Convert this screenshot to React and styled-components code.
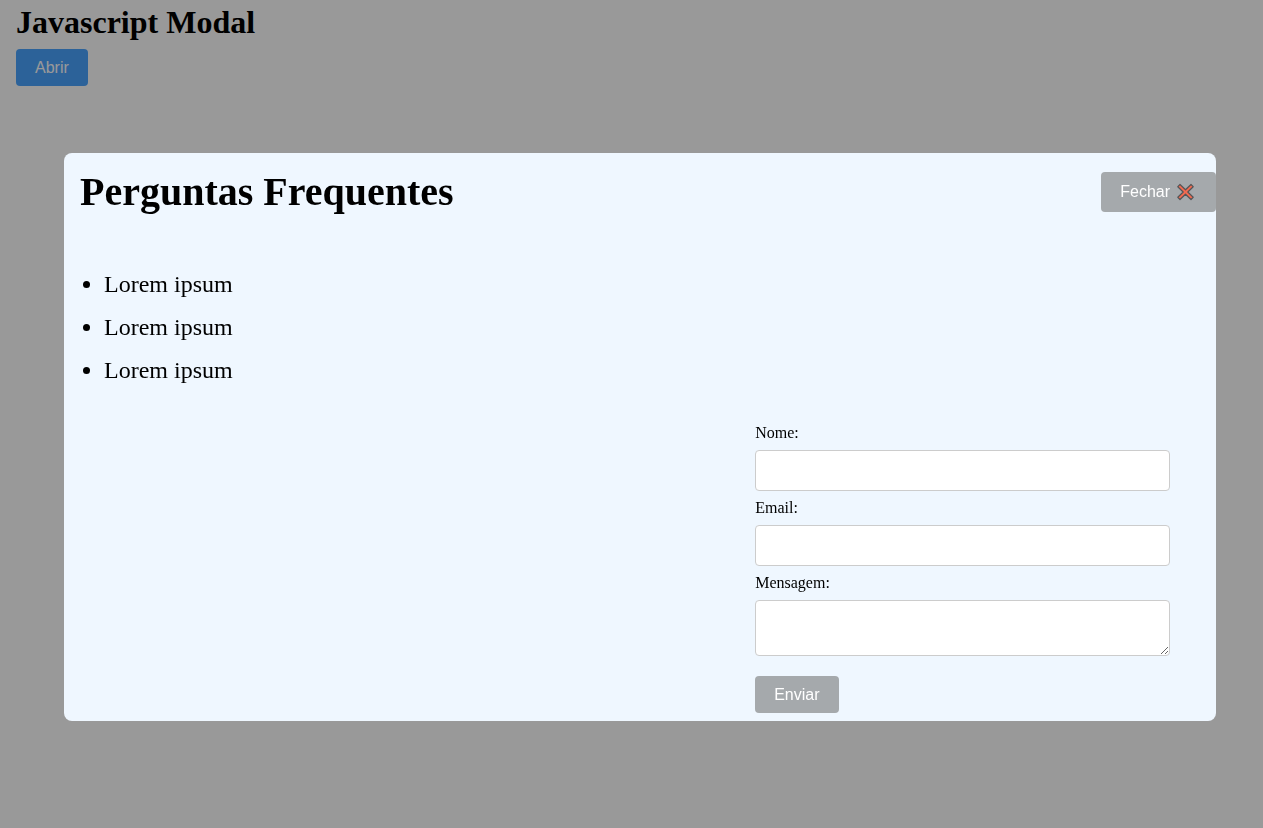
import React, { useState } from "react";
import styled, { createGlobalStyle } from "styled-components";

const GlobalStyle = createGlobalStyle`
  *, *::before, *::after { box-sizing: border-box; }
  body {
    margin: 0;
    background: #fff;
    color: #000;
    font: 16px/18px "Liberation Serif", serif;
  }
`;

const Page = styled.main`
  padding: 4px 16px;
`;

const PageTitle = styled.h1`
  margin: 0 0 8px;
  font-size: 32px;
  line-height: 37px;
`;

const Button = styled.button`
  display: inline-flex;
  align-items: center;
  gap: 6px;
  height: ${(p) => (p.$tall ? 40 : 37)}px;
  padding: 0 19px;
  border: 0;
  border-radius: 4px;
  background: ${(p) => (p.$primary ? "#4aa3ff" : "#a5a9ac")};
  color: #fff;
  font: 16px/18px "Liberation Sans", sans-serif;
  cursor: pointer;
`;

const Overlay = styled.div`
  position: fixed;
  inset: 0;
  display: flex;
  align-items: flex-start;
  overflow: auto;
  padding: 153px 47px 48px 64px;
  background: rgba(0, 0, 0, 0.4);
`;

const Dialog = styled.section`
  flex: 1;
  min-width: 0;
  padding-bottom: 8px;
  border-radius: 8px;
  background: #eff7ff;
`;

const DialogHeader = styled.header`
  display: flex;
  align-items: center;
  justify-content: space-between;
  padding: 16px 0 0 16px;
`;

const DialogTitle = styled.h2`
  margin: 0;
  font-size: 40px;
  line-height: 46px;
`;

const Questions = styled.ul`
  margin: 56px 0 40px;
  padding-left: 40px;
  font-size: 24px;
  line-height: 27px;
`;

const Question = styled.li`
  margin-bottom: 16px;
`;

const Form = styled.form`
  width: 36%;
  margin-left: 60%;
`;

const Label = styled.label`
  display: block;
  margin-bottom: 8px;
`;

const Field = styled.input`
  display: block;
  width: 100%;
  height: 41px;
  margin-bottom: 8px;
  padding: 8px;
  border: 1px solid #ccc;
  border-radius: 4px;
  background: #fff;
  font: inherit;
`;

const MessageField = styled(Field)`
  height: 56px;
  margin-bottom: 20px;
  resize: vertical;
`;

const CloseIcon = () => (
  <svg width="21" height="18" viewBox="0 0 21 18" aria-hidden="true">
    <path
      d="M4 1.5 L9.5 6.8 L15 1.5 L17.2 3.7 L11.8 9 L17.2 14.3 L15 16.5 L9.5 11.2 L4 16.5 L1.8 14.3 L7.2 9 L1.8 3.7 Z"
      fill="#f2694f"
      stroke="#555557"
      strokeWidth="1.2"
      strokeLinejoin="round"
    />
  </svg>
);

export default function App() {
  const [open, setOpen] = useState(true);
  return (
    <>
      <GlobalStyle />
      <Page>
        <PageTitle>Javascript Modal</PageTitle>
        <Button type="button" $primary onClick={() => setOpen(true)}>Abrir</Button>
      </Page>
      {open && (
        <Overlay>
          <Dialog role="dialog" aria-modal="true" aria-labelledby="dialog-title">
            <DialogHeader>
              <DialogTitle id="dialog-title">Perguntas Frequentes</DialogTitle>
              <Button type="button" $tall onClick={() => setOpen(false)}>
                Fechar
                <CloseIcon />
              </Button>
            </DialogHeader>
            <Questions>
              <Question>Lorem ipsum</Question>
              <Question>Lorem ipsum</Question>
              <Question>Lorem ipsum</Question>
            </Questions>
            <Form onSubmit={(e) => e.preventDefault()}>
              <Label htmlFor="nome">Nome:</Label>
              <Field id="nome" name="nome" type="text" />
              <Label htmlFor="email">Email:</Label>
              <Field id="email" name="email" type="email" />
              <Label htmlFor="mensagem">Mensagem:</Label>
              <MessageField as="textarea" id="mensagem" name="mensagem" />
              <Button type="submit">Enviar</Button>
            </Form>
          </Dialog>
        </Overlay>
      )}
    </>
  );
}
